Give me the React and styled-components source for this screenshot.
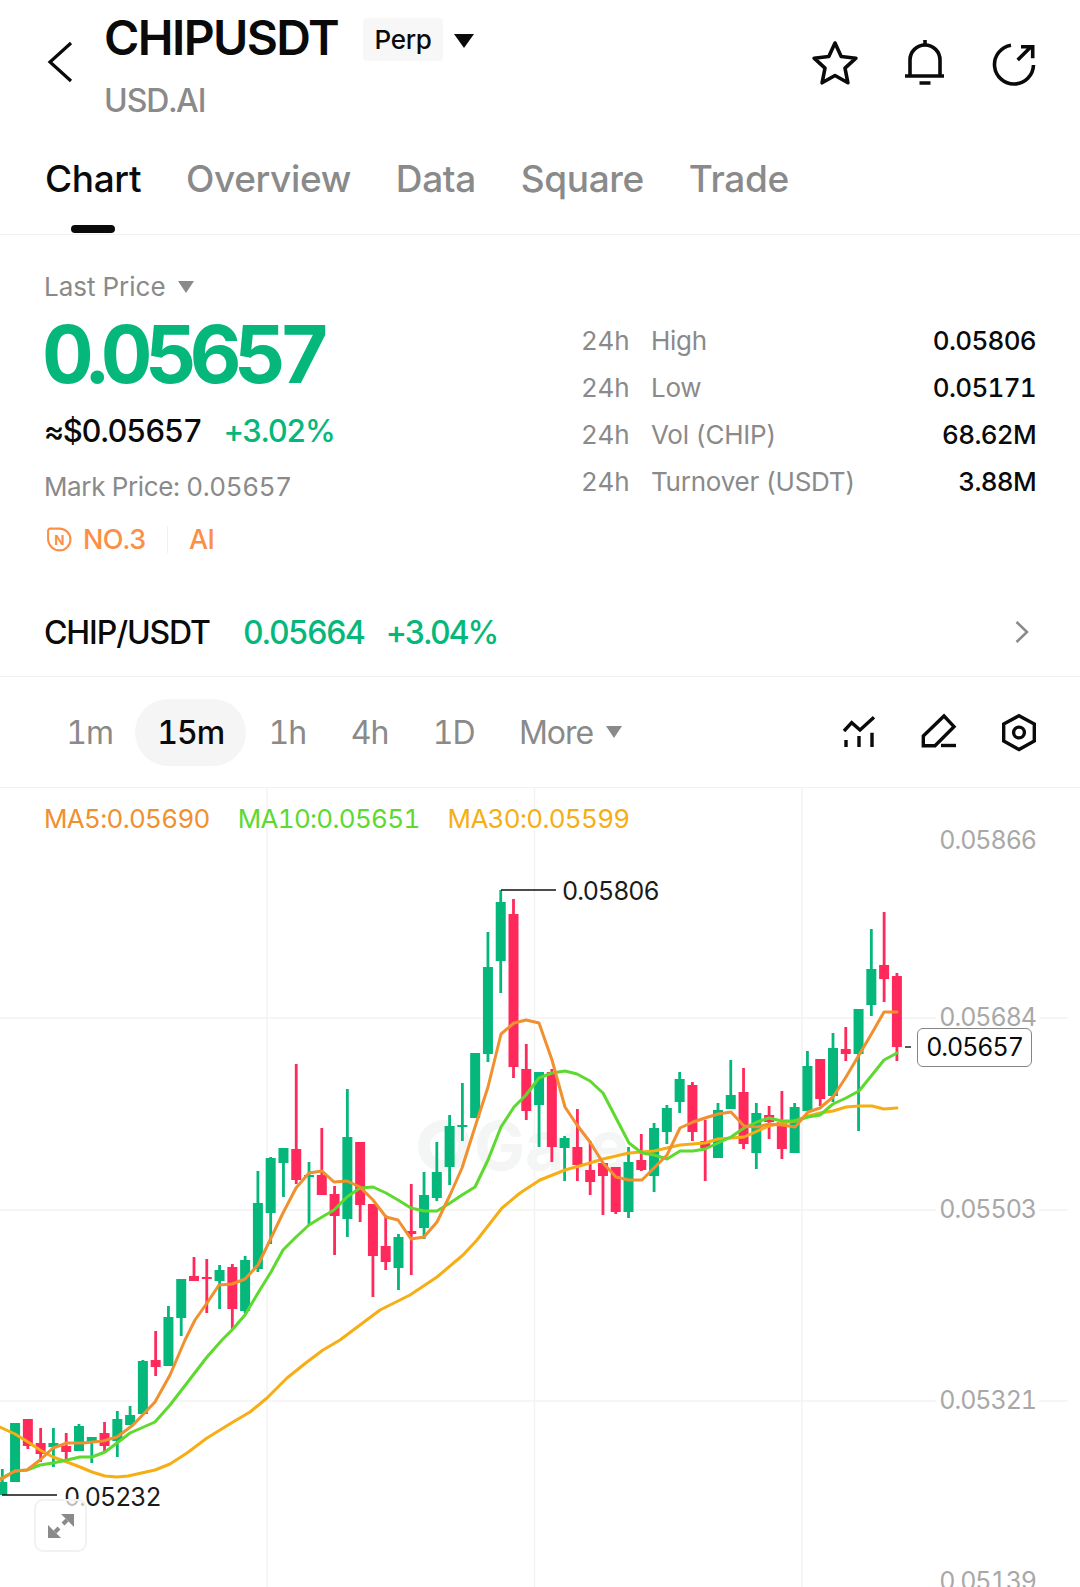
import React from 'react';
import styled, { createGlobalStyle } from 'styled-components';

const GREEN = '#05B77B';
const RED = '#FF2A5B';
const GREY = '#8A8A8A';

const GlobalStyle = createGlobalStyle`
  html, body {
    margin: 0;
    padding: 0;
    background: #fff;
    overflow: hidden;
  }
  body {
    font-family: Inter, "Liberation Sans", sans-serif;
    font-variant-numeric: tabular-nums;
    color: #0a0a0a;
  }
`;

const Page = styled.div`
  width: 1080px;
  height: 1587px;
  overflow: hidden;
  background: #fff;
`;

/* top bar */
const Header = styled.header`
  display: flex;
  align-items: center;
  height: 128px;
  padding: 0 41px 0 44px;
`;

const BackIcon = styled.svg`
  width: 30px;
  height: 44px;
  flex: none;
  margin-bottom: 5px;
`;

const TitleBlock = styled.div`
  display: flex;
  flex-direction: column;
  gap: 20px;
  margin: 8px 0 0 30px;
  flex: 1;
`;

const TitleRow = styled.div`
  display: flex;
  align-items: center;
  height: 46px;
`;

const Title = styled.h1`
  margin: 0;
  font-size: 48px;
  line-height: 46px;
  font-weight: 600;
  letter-spacing: -1.6px;
`;

const Badge = styled.span`
  display: flex;
  align-items: center;
  height: 43px;
  margin: 2px 0 0 25px;
  padding: 0 11.5px;
  border-radius: 4px;
  background: #f7f7f7;
  font-size: 26px;
  font-weight: 500;
  letter-spacing: -0.3px;
`;

const Caret = styled.span`
  display: inline-block;
  flex: none;
  width: 0;
  height: 0;
  border-left: ${p => p.$size}px solid transparent;
  border-right: ${p => p.$size}px solid transparent;
  border-top: ${p => p.$size * 1.45}px solid ${p => p.$color};
  margin-left: ${p => p.$gap}px;
  margin-top: ${p => p.$top || 0}px;
`;

const SubTitle = styled.div`
  font-size: 32px;
  line-height: 40px;
  font-weight: 500;
  letter-spacing: -1px;
  color: ${GREY};
`;

const Actions = styled.div`
  display: flex;
  gap: 42px;
`;

const ActionIcon = styled.svg`
  display: block;
  width: 48px;
  height: 48px;
  fill: none;
  stroke: #0a0a0a;
  stroke-width: 3.6;
`;

/* tabs */
const Tabs = styled.nav`
  display: flex;
  gap: 44.75px;
  height: 77px;
  padding: 29px 0 0 45px;
  border-bottom: 1px solid #f1f1f1;
`;

const Tab = styled.div`
  position: relative;
  font-size: 37px;
  line-height: 44px;
  font-weight: 500;
  letter-spacing: -0.35px;
  color: ${p => (p.$active ? '#0a0a0a' : GREY)};

  ${p => p.$active && `
    &::after {
      content: '';
      position: absolute;
      left: 26px;
      top: 68px;
      width: 44px;
      height: 8px;
      border-radius: 4px;
      background: #0a0a0a;
    }
  `}
`;

/* price block */
const Info = styled.section`
  display: flex;
  justify-content: space-between;
  padding: 34px 44px 31px 44px;
`;

const PriceCol = styled.div`
  display: flex;
  flex-direction: column;
`;

const LastPrice = styled.div`
  display: flex;
  align-items: center;
  font-size: 26px;
  line-height: 36px;
  color: ${GREY};
`;

const BigPrice = styled.div`
  margin: 9px 0 0 -2px;
  font-size: 80px;
  line-height: 80px;
  font-weight: 700;
  letter-spacing: -7.2px;
  color: ${GREEN};
`;

const Fiat = styled.div`
  display: flex;
  gap: 22px;
  margin-top: 17px;
  font-size: 31px;
  line-height: 40px;
  font-weight: 500;
  letter-spacing: -1.25px;
`;

const Change = styled.span`
  color: ${GREEN};
  letter-spacing: -1.5px;
`;

const MarkPrice = styled.div`
  margin-top: 18px;
  font-size: 26px;
  line-height: 36px;
  letter-spacing: -0.37px;
  color: ${GREY};
`;

const TagRow = styled.div`
  display: flex;
  align-items: center;
  margin-top: 16px;
  height: 36px;
  font-size: 27px;
  font-weight: 500;
  letter-spacing: -0.7px;
  color: #FA9048;
`;

const TagIcon = styled.svg`
  width: 27px;
  height: 27px;
  margin: 0 11px 0 1px;
  fill: none;
  stroke: #FA9048;
  stroke-width: 2;
`;

const TagDivider = styled.span`
  width: 1px;
  height: 27px;
  margin: 0 21px;
  background: #f0f0f0;
`;

const Stats = styled.div`
  width: 455px;
  margin-top: 48px;
`;

const StatRow = styled.div`
  display: flex;
  align-items: center;
  height: 47px;
  font-size: 26px;
  letter-spacing: -0.25px;
`;

const StatPeriod = styled.span`
  width: 70px;
  color: ${GREY};
`;

const StatLabel = styled.span`
  flex: 1;
  color: ${GREY};
`;

const StatValue = styled.span`
  font-weight: 500;
  letter-spacing: -0.7px;
`;

/* spot pair row */
const PairRow = styled.div`
  display: flex;
  align-items: center;
  height: 88px;
  padding: 0 51px 0 44px;
  border-bottom: 1px solid #f1f1f1;
  font-size: 32px;
  font-weight: 500;
  letter-spacing: -1.1px;
`;

const PairName = styled.span`
  width: 199px;
`;

const PairPrice = styled.span`
  color: ${GREEN};
  width: 143px;
  letter-spacing: -1.7px;
`;

const PairChange = styled.span`
  color: ${GREEN};
  flex: 1;
  letter-spacing: -2px;
`;

const Chevron = styled.svg`
  width: 14px;
  height: 24px;
  fill: none;
  stroke: ${GREY};
  stroke-width: 2.5;
`;

/* interval toolbar */
const Toolbar = styled.div`
  display: flex;
  align-items: center;
  height: 110px;
  padding: 0 41px 0 44px;
  border-bottom: 1px solid #f1f1f1;
`;

const Interval = styled.div`
  display: flex;
  align-items: center;
  height: 67px;
  padding: 0 22.2px;
  border-radius: 34px;
  font-size: 32px;
  letter-spacing: -1px;
  font-weight: ${p => (p.$active ? 500 : 400)};
  color: ${p => (p.$active ? '#0a0a0a' : GREY)};
  background: ${p => (p.$active ? '#f5f5f5' : 'transparent')};
`;

const Tools = styled.div`
  display: flex;
  gap: 40px;
  margin-left: auto;
`;

const ToolIcon = styled.svg`
  display: block;
  width: 40px;
  height: 40px;
  fill: none;
  stroke: #0a0a0a;
  stroke-width: 3.4;
`;

/* chart */
const Chart = styled.div`
  position: relative;
  height: 799px;
  overflow: hidden;
`;

const ChartSvg = styled.svg`
  display: block;
  width: 1080px;
  height: 799px;
`;

const Legend = styled.div`
  position: absolute;
  left: 44px;
  top: 13px;
  display: flex;
  font-size: 26px;
  line-height: 36px;
  letter-spacing: -0.7px;
`;

const LegendItem = styled.span`
  color: ${p => p.$color};
  margin-right: 28px;
`;

const AxisLabel = styled.div`
  position: absolute;
  right: 41px;
  top: ${p => p.$y - 788 - 18}px;
  padding: 0 3px;
  background: #fff;
  font-size: 25px;
  line-height: 36px;
  letter-spacing: -1.05px;
  color: #a8a8a8;
`;

const CurrentPrice = styled.div`
  position: absolute;
  left: 917px;
  top: 240px;
  width: 115px;
  height: 39px;
  box-sizing: border-box;
  border: 1.5px solid #858585;
  border-radius: 6px;
  background: #fff;
  text-align: center;
  font-size: 25px;
  line-height: 36px;
  letter-spacing: -1.05px;
  color: #0a0a0a;
`;

const ExtremeLabel = styled.div`
  position: absolute;
  left: ${p => p.$x}px;
  top: ${p => p.$y - 788 - 18}px;
  font-size: 25px;
  line-height: 36px;
  letter-spacing: -1.05px;
  color: #1a1a1a;
`;

const ExpandButton = styled.div`
  position: absolute;
  left: 34px;
  top: 711px;
  display: flex;
  align-items: center;
  justify-content: center;
  width: 53px;
  height: 53px;
  box-sizing: border-box;
  border: 2px solid #f2f2f2;
  border-radius: 9px;
  background: rgba(255, 255, 255, 0.72);
`;

const WatermarkText = styled.text`
  font-family: Inter, "Liberation Sans", sans-serif;
  font-size: 68px;
  font-weight: 700;
  fill: #f4f5f5;
`;

// [colour, wick top, body top, body bottom, wick bottom] in page pixels
const G = GREEN;
const R = RED;
const candles = [
  [G, 1469, 1482, 1495, 1495],
  [G, 1423, 1423, 1482, 1482],
  [R, 1419, 1419, 1446, 1449],
  [R, 1428, 1443, 1454, 1462],
  [G, 1428, 1443, 1447, 1467],
  [R, 1433, 1446, 1452, 1459],
  [G, 1424, 1426, 1451, 1451],
  [G, 1437, 1437, 1441, 1463],
  [R, 1422, 1433, 1446, 1453],
  [G, 1411, 1419, 1441, 1457],
  [G, 1406, 1415, 1425, 1425],
  [G, 1360, 1361, 1414, 1414],
  [R, 1331, 1360, 1367, 1376],
  [G, 1306, 1317, 1366, 1366],
  [G, 1279, 1279, 1318, 1336],
  [R, 1257, 1276, 1281, 1281],
  [R, 1259, 1277, 1279, 1313],
  [G, 1265, 1270, 1281, 1309],
  [R, 1264, 1267, 1309, 1330],
  [G, 1256, 1260, 1311, 1313],
  [G, 1171, 1203, 1269, 1272],
  [G, 1157, 1158, 1213, 1244],
  [G, 1148, 1148, 1163, 1197],
  [R, 1064, 1149, 1180, 1184],
  [G, 1162, 1175, 1177, 1225],
  [R, 1128, 1175, 1195, 1195],
  [R, 1186, 1194, 1216, 1255],
  [G, 1089, 1137, 1219, 1237],
  [R, 1142, 1142, 1205, 1222],
  [R, 1204, 1204, 1256, 1297],
  [R, 1215, 1246, 1262, 1270],
  [G, 1234, 1237, 1268, 1290],
  [R, 1184, 1231, 1234, 1275],
  [G, 1172, 1195, 1228, 1239],
  [G, 1142, 1172, 1198, 1201],
  [G, 1115, 1126, 1167, 1185],
  [G, 1083, 1125, 1126, 1141],
  [G, 1053, 1053, 1118, 1118],
  [G, 932, 967, 1054, 1062],
  [G, 890, 902, 961, 993],
  [R, 899, 914, 1067, 1078],
  [R, 1044, 1069, 1111, 1120],
  [G, 1072, 1072, 1105, 1147],
  [R, 1069, 1072, 1147, 1162],
  [G, 1136, 1138, 1148, 1181],
  [R, 1109, 1147, 1165, 1181],
  [R, 1141, 1170, 1182, 1195],
  [R, 1163, 1163, 1176, 1215],
  [R, 1167, 1167, 1212, 1214],
  [G, 1147, 1162, 1212, 1218],
  [R, 1134, 1160, 1170, 1171],
  [G, 1123, 1128, 1176, 1192],
  [G, 1105, 1108, 1132, 1144],
  [G, 1072, 1079, 1102, 1113],
  [R, 1082, 1085, 1132, 1141],
  [R, 1120, 1141, 1148, 1181],
  [G, 1103, 1110, 1158, 1158],
  [G, 1060, 1095, 1109, 1109],
  [R, 1068, 1092, 1144, 1149],
  [G, 1103, 1113, 1153, 1169],
  [R, 1106, 1115, 1122, 1139],
  [R, 1091, 1122, 1149, 1159],
  [G, 1103, 1107, 1153, 1153],
  [G, 1051, 1066, 1111, 1111],
  [R, 1059, 1059, 1099, 1106],
  [G, 1033, 1048, 1096, 1102],
  [R, 1027, 1049, 1054, 1061],
  [G, 1009, 1009, 1054, 1131],
  [G, 929, 969, 1005, 1016],
  [R, 912, 965, 979, 1002],
  [R, 973, 976, 1047, 1061],
];

const ma5 = '0,1480 15,1471 27,1470 40,1460 53,1448 67,1443 83,1443 103,1441 117,1437 133,1425 155,1402 170,1375 185,1340 195,1320 207,1303 219,1285 232,1284 245,1279 258,1265 271,1238 283,1213 296,1188 309,1173 322,1171 334,1182 347,1181 360,1187 373,1200 386,1217 398,1220 411,1239 424,1237 437,1222 450,1195 462,1168 475,1127 488,1087 501,1034 514,1023 526,1020 539,1023 552,1060 565,1107 577,1125 590,1142 603,1163 616,1177 629,1180 642,1180 654,1168 667,1155 680,1128 693,1122 705,1118 718,1114 731,1112 744,1126 757,1127 769,1124 782,1125 795,1127 808,1112 820,1108 833,1097 846,1077 859,1055 872,1033 884,1012 897,1012';

const ma10 = '0,1479 15,1471 27,1470 40,1465 53,1463 67,1460 80,1457 92,1457 105,1452 117,1443 130,1433 155,1422 170,1405 187,1383 207,1357 222,1340 232,1330 245,1315 258,1293 271,1272 283,1250 296,1237 309,1225 322,1217 334,1210 347,1197 360,1188 373,1187 386,1193 398,1200 411,1208 424,1211 437,1211 450,1203 462,1195 475,1187 488,1160 501,1127 514,1107 526,1095 539,1078 552,1073 565,1071 577,1074 590,1081 603,1093 616,1118 629,1143 642,1153 654,1155 667,1159 680,1151 693,1151 705,1149 718,1143 731,1137 744,1128 757,1122 769,1118 782,1121 795,1121 808,1117 820,1115 833,1104 846,1098 859,1091 872,1075 884,1060 897,1053';

const ma30 = '0,1427 15,1434 28,1442 40,1450 53,1457 67,1462 80,1467 92,1472 105,1476 117,1477 128,1476 155,1470 170,1464 187,1453 207,1438 233,1422 250,1412 267,1398 287,1378 307,1362 323,1350 340,1340 380,1310 410,1295 437,1277 463,1255 477,1240 502,1208 520,1193 540,1180 565,1170 590,1163 603,1159 629,1153 654,1151 667,1148 680,1145 705,1143 718,1139 744,1137 769,1126 782,1123 795,1121 808,1116 820,1113 833,1111 846,1107 859,1106 872,1106 884,1109 897,1108';

const Candle = ({ data, index }) => {
  const [color, wickTop, bodyTop, bodyBottom, wickBottom] = data;
  const x = 2.3 + 12.78 * index;
  return (
    <g fill={color}>
      <rect x={x - 1.4} y={wickTop} width="2.8" height={wickBottom - wickTop} />
      <rect x={x - 5} y={bodyTop} width="10" height={Math.max(bodyBottom - bodyTop, 2)} />
    </g>
  );
};

const KLine = () => (
  <ChartSvg viewBox="0 788 1080 799">
    <g stroke="#f3f3f3" strokeWidth="1.5">
      <path d="M267 788V1587M534.5 788V1587M802 788V1587" />
      <path d="M0 1018H1068M0 1210H1068M0 1401H1068" />
    </g>
    {/* faint exchange watermark behind the candles */}
    <circle cx="444" cy="1146" r="20" fill="none" stroke="#f4f5f5" strokeWidth="12" />
    <WatermarkText x="474" y="1170">Gate</WatermarkText>
    {candles.map((c, i) => <Candle key={i} data={c} index={i} />)}
    <g fill="none" strokeWidth="3" strokeLinejoin="round" strokeLinecap="round">
      <polyline points={ma30} stroke="#F6AE14" />
      <polyline points={ma10} stroke="#5DD92F" />
      <polyline points={ma5} stroke="#F0902F" />
    </g>
    <g stroke="#111" strokeWidth="1.4">
      <path d="M501 890H556" />
      <path d="M2 1495H57" />
      <path d="M905 1047H911" />
    </g>
  </ChartSvg>
);

const App = () => (
  <Page>
    <GlobalStyle />
    <Header>
      <BackIcon viewBox="0 0 30 44" fill="none" stroke="#0a0a0a" strokeWidth="3.2">
        <path d="M27 3L6 22L27 41" />
      </BackIcon>
      <TitleBlock>
        <TitleRow>
          <Title>CHIPUSDT</Title>
          <Badge>Perp</Badge>
          <Caret $size={10} $color="#0a0a0a" $gap={11} $top={6} />
        </TitleRow>
        <SubTitle>USD.AI</SubTitle>
      </TitleBlock>
      <Actions>
        <ActionIcon viewBox="0 0 48 48" strokeLinejoin="round">
          <path d="M24 3L30.2 16.5L44.9 18.2L34 28.2L36.9 42.8L24 35.5L11.1 42.8L14 28.2L3.1 18.2L17.8 16.5Z" />
        </ActionIcon>
        <ActionIcon viewBox="0 0 48 48">
          <path d="M9 36V20a15 15 0 0 1 30 0V36" />
          <path d="M4 36H43M24 0V6M18.5 43H29.5" />
        </ActionIcon>
        <ActionIcon viewBox="0 0 48 48">
          <path d="M20 5.2A19.5 19.5 0 1 0 42.5 25" />
          <path d="M26.7 20L40 6.7M30 6.7H41.7V18.3" />
        </ActionIcon>
      </Actions>
    </Header>

    <Tabs>
      <Tab $active>Chart</Tab>
      <Tab>Overview</Tab>
      <Tab>Data</Tab>
      <Tab>Square</Tab>
      <Tab>Trade</Tab>
    </Tabs>

    <Info>
      <PriceCol>
        <LastPrice>
          Last Price
          <Caret $size={8.5} $color={GREY} $gap={12} />
        </LastPrice>
        <BigPrice>0.05657</BigPrice>
        <Fiat>
          <span>≈$0.05657</span>
          <Change>+3.02%</Change>
        </Fiat>
        <MarkPrice>Mark Price: 0.05657</MarkPrice>
        <TagRow>
          <TagIcon viewBox="0 0 26 26">
            <path d="M5 2.5H14a10.5 10.5 0 0 1 0 21a11 11 0 0 1 -11 -10.5V4.5a2 2 0 0 1 2 -2Z" />
            <text x="13.5" y="18" textAnchor="middle" fontSize="13" fontWeight="700" fill="#FA9048" stroke="none">N</text>
          </TagIcon>
          NO.3
          <TagDivider />
          AI
        </TagRow>
      </PriceCol>
      <Stats>
        <StatRow>
          <StatPeriod>24h</StatPeriod><StatLabel>High</StatLabel><StatValue>0.05806</StatValue>
        </StatRow>
        <StatRow>
          <StatPeriod>24h</StatPeriod><StatLabel>Low</StatLabel><StatValue>0.05171</StatValue>
        </StatRow>
        <StatRow>
          <StatPeriod>24h</StatPeriod><StatLabel>Vol (CHIP)</StatLabel><StatValue>68.62M</StatValue>
        </StatRow>
        <StatRow>
          <StatPeriod>24h</StatPeriod><StatLabel>Turnover (USDT)</StatLabel><StatValue>3.88M</StatValue>
        </StatRow>
      </Stats>
    </Info>

    <PairRow>
      <PairName>CHIP/USDT</PairName>
      <PairPrice>0.05664</PairPrice>
      <PairChange>+3.04%</PairChange>
      <Chevron viewBox="0 0 14 24">
        <path d="M1.5 2L12 12L1.5 22" />
      </Chevron>
    </PairRow>

    <Toolbar>
      <Interval>1m</Interval>
      <Interval $active>15m</Interval>
      <Interval>1h</Interval>
      <Interval>4h</Interval>
      <Interval>1D</Interval>
      <Interval>
        More
        <Caret $size={8.5} $color={GREY} $gap={13} />
      </Interval>
      <Tools>
        <ToolIcon viewBox="0 0 40 40">
          <path d="M5 19L12.7 10.7L21 18L35 5.3" />
          <path d="M7 28V35M20 24V35M33 20.7V35" />
        </ToolIcon>
        <ToolIcon viewBox="0 0 40 40">
          <path d="M25 4L35 14.7L16 33.7H4.3V24Z" />
          <path d="M22 33.5H37" />
        </ToolIcon>
        <ToolIcon viewBox="0 0 40 40">
          <path d="M20 3.7L35.3 12V29L20 37.5L4.7 29V12Z" />
          <circle cx="20" cy="20.5" r="5.4" />
        </ToolIcon>
      </Tools>
    </Toolbar>

    <Chart>
      <KLine />
      <Legend>
        <LegendItem $color="#F0902F">MA5:0.05690</LegendItem>
        <LegendItem $color="#5DD92F">MA10:0.05651</LegendItem>
        <LegendItem $color="#F6AE14">MA30:0.05599</LegendItem>
      </Legend>
      <AxisLabel $y={840}>0.05866</AxisLabel>
      <AxisLabel $y={1017}>0.05684</AxisLabel>
      <AxisLabel $y={1209}>0.05503</AxisLabel>
      <AxisLabel $y={1400}>0.05321</AxisLabel>
      <AxisLabel $y={1581}>0.05139</AxisLabel>
      <CurrentPrice>0.05657</CurrentPrice>
      <ExtremeLabel $x={562} $y={891}>0.05806</ExtremeLabel>
      <ExtremeLabel $x={64} $y={1497}>0.05232</ExtremeLabel>
      <ExpandButton>
        <svg width="28" height="28" viewBox="0 0 28 28" fill="#8A8A8A" stroke="#8A8A8A" strokeWidth="4">
          <path d="M14 2H27V15Z" stroke="none" />
          <path d="M1 13V26H14Z" stroke="none" />
          <path d="M20 8L16 12M8 20L12 16" />
        </svg>
      </ExpandButton>
    </Chart>
  </Page>
);

export default App;
